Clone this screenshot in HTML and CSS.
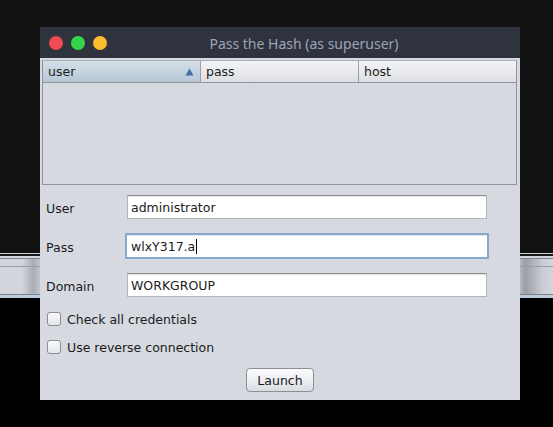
FILE: index.html
```html
<!DOCTYPE html>
<html>
<head>
<meta charset="utf-8">
<link rel="stylesheet" href="styles.css">
</head>
<body>
<div class="desktop">
  <div class="desk-top"></div>
  <div class="desk-bar">
    <div class="bar-hl"></div>
    <div class="bar-dark"></div>
    <div class="bar-light"></div>
    <div class="bar-line"></div>
    <div class="bar-band short"></div>
    <div class="bar-line soft"></div>
    <div class="bar-band tall"></div>
    <div class="bar-line"></div>
    <div class="bar-blue"></div>
  </div>
  <div class="desk-bottom"></div>
</div>

<div class="window">
  <div class="titlebar">
    <div class="lights">
      <span class="light red"></span>
      <span class="light green"></span>
      <span class="light yellow"></span>
    </div>
    <div class="title">Pass the Hash (as superuser)</div>
  </div>
  <div class="content">
    <div class="table">
      <div class="thead">
        <div class="th th-sel"><span>user</span><svg class="sort" width="9" height="8" viewBox="0 0 9 8"><path d="M4.5 0.5 L8.5 7.5 L0.5 7.5 Z" fill="#40709f"/></svg></div>
        <div class="th"><span>pass</span></div>
        <div class="th th-last"><span>host</span></div>
      </div>
    </div>
    <div class="form">
      <label class="lbl">User</label>
      <div class="field"><span>administrator</span></div>
      <label class="lbl">Pass</label>
      <div class="field focused"><span>wlxY317.a</span><i class="caret"></i></div>
      <label class="lbl">Domain</label>
      <div class="field"><span>WORKGROUP</span></div>
    </div>
    <div class="checks">
      <div class="check"><span class="box"></span><span>Check all credentials</span></div>
      <div class="check"><span class="box"></span><span>Use reverse connection</span></div>
    </div>
    <div class="actions">
      <button class="btn">Launch</button>
    </div>
  </div>
</div>
</body>
</html>
```

FILE: styles.css
```css
* { box-sizing: border-box; }
html, body { margin: 0; padding: 0; }
body {
  width: 553px;
  height: 427px;
  overflow: hidden;
  background: #000;
  font-family: "DejaVu Sans", sans-serif;
  font-size: 12px;
  color: #1b1b22;
  position: relative;
}
.desktop { display: flex; flex-direction: column; height: 427px; }
.desk-top { height: 253px; background: #111111; }
.desk-bar { display: flex; flex-direction: column; }
.bar-hl { height: 1px; background: #c6cad3; }
.bar-dark { height: 2px; background: #1a1a1a; }
.bar-light { height: 2px; background: #d2d5dc; }
.bar-line { height: 1px; background: #7e828a; }
.bar-line.soft { background: #9a9ea6; }
.bar-band {
  background: linear-gradient(90deg, #d2d5dc 0%, #d2d5dc 4%, #a9acb3 6%, #d2d5dc 8%, #d2d5dc 93%, #9b9ea5 95%, #c8cbd2 98%, #d2d5dc 100%);
}
.bar-band.short { height: 7px; }
.bar-band.tall { height: 27px; }
.bar-blue { height: 3px; background: #bccbdc; }
.desk-bottom { flex: 1; background: #000; }

.window {
  position: absolute;
  left: 40px;
  top: 27px;
  width: 480px;
  height: 373px;
  background: #d6d9e0;
  display: flex;
  flex-direction: column;
}
.titlebar {
  height: 31px;
  background: #2f333e;
  display: flex;
  align-items: center;
  position: relative;
}
.lights { display: flex; gap: 8px; padding-left: 9px; padding-top: 1px; }
.light { width: 14px; height: 14px; border-radius: 50%; display: block; }
.red { background: #f04b55; }
.green { background: #35d54a; }
.yellow { background: #f9bd2e; }
.title {
  flex: 1;
  text-align: center;
  font-family: "Noto Sans", sans-serif;
  font-size: 14px;
  color: #9ca5b6;
  padding-right: 19px;
  padding-top: 1px;
}
.content { display: flex; flex-direction: column; }
.table {
  margin: 2px 3px 0 2px;
  height: 125px;
  border: 1px solid #8f939a;
  border-top-color: #a9adb4;
  background: #d6d9e0;
}
.thead { display: flex; height: 22px; border-bottom: 1px solid #8f939a; }
.th {
  width: 158px;
  display: flex;
  align-items: center;
  justify-content: space-between;
  padding: 0 6px 0 5px;
  background: linear-gradient(#f3f4f6, #e7e8eb 60%, #dcdee2);
  border-right: 1px solid #9a9ea6;
  font-size: 12.5px;
}
.th-sel { background: linear-gradient(#d4dfe8, #c5d3df 50%, #b6c6d4); }
.th-last { flex: 1; border-right: none; }
.sort { margin-top: 1px; }

.form {
  display: grid;
  grid-template-columns: 81px 360px;
  row-gap: 15px;
  padding: 10px 0 0 6px;
  align-items: center;
}
.lbl { font-size: 12.5px; color: #1b1b22; padding-top: 2px; }
.field {
  height: 24px;
  background: #fff;
  border: 1px solid #b2b4b8;
  border-top-color: #8c8e92;
  box-shadow: inset 0 1px 0 #e4e4e4;
  display: flex;
  align-items: center;
  padding-left: 3px;
  padding-top: 1px;
  font-size: 12.5px;
  color: #1b1b22;
}
.field.focused {
  outline: 1px solid #86a8d2;
  border-color: #8aa8cc;
  margin-left: -1px;
  margin-right: -1px;
  padding-left: 4px;
}
.caret { display: inline-block; width: 1px; height: 15px; background: #000; margin-left: 1px; }

.checks {
  display: flex;
  flex-direction: column;
  gap: 14px;
  padding: 15px 0 0 7px;
}
.check { display: flex; align-items: center; gap: 6px; height: 14px; font-size: 12.5px; }
.box {
  width: 14px;
  height: 14px;
  border: 1px solid #8a8d93;
  border-radius: 3px;
  background: linear-gradient(#fbfbfc, #e3e5e9);
  display: block;
}
.actions { display: flex; justify-content: center; padding-top: 14px; }
.btn {
  width: 68px;
  height: 24px;
  border: 1px solid #8b8e94;
  border-radius: 4px;
  background: linear-gradient(#fbfbfc, #eceef1 50%, #d9dce2);
  font-family: "DejaVu Sans", sans-serif;
  font-size: 12.5px;
  color: #1b1b22;
  padding: 1px 0 0 0;
}
```
